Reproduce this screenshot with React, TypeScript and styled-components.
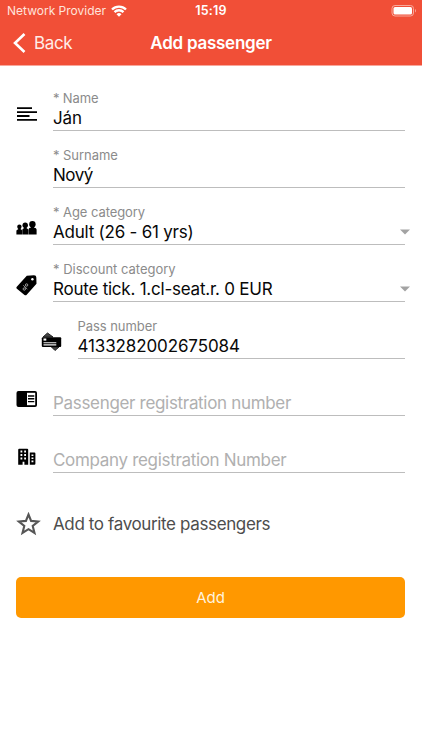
import React from "react";
import styled, { createGlobalStyle } from "styled-components";

const GlobalStyle = createGlobalStyle`
  * { box-sizing: border-box; }
  body { margin: 0; background: #fff; font-family: Inter, "Liberation Sans", sans-serif; }
`;

const Screen = styled.main`
  width: 422px;
  height: 750px;
  display: flex;
  flex-direction: column;
  background: #fff;
  overflow: hidden;
`;

const Header = styled.header`
  height: 66px;
  flex: none;
  background: #f14f37;
  border-bottom: 1px solid #f8a79b;
  color: #fff;
`;

const Bar = styled.div<{ $height: number }>`
  display: grid;
  grid-template-columns: 1fr auto 1fr;
  align-items: center;
  height: ${(p) => p.$height}px;
`;

const StatusLeft = styled.div`
  display: flex;
  align-items: center;
  gap: 5px;
  padding-left: 7px;
  color: #ffe3dc;
`;

const StatusRight = styled.div`
  display: flex;
  justify-content: flex-end;
  padding-right: 5px;
`;

const Text = styled.span<{ $size: number; $track?: number; $weight?: number; $color?: string }>`
  font-size: ${(p) => p.$size}px;
  line-height: 22px;
  letter-spacing: ${(p) => p.$track ?? 0}px;
  font-weight: ${(p) => p.$weight ?? 400};
  color: ${(p) => p.$color ?? "inherit"};
  white-space: nowrap;
`;

const BackButton = styled.button`
  display: flex;
  align-items: center;
  gap: 8px;
  padding: 0 0 0 13px;
  border: 0;
  background: none;
  color: #ffece8;
  font-family: inherit;
`;

const Form = styled.form`
  display: flex;
  flex-direction: column;
  padding: 8px 17px 0 16px;
`;

const Row = styled.div<{ $indent?: boolean }>`
  display: grid;
  grid-template-columns: 37px 1fr;
  height: 57px;
  padding-left: ${(p) => (p.$indent ? 24.5 : 0)}px;
`;

const IconCell = styled.div`
  display: flex;
  align-items: center;
  height: 24px;
  margin-top: 28px;
`;

const Field = styled.div`
  display: flex;
  flex-direction: column;
  justify-content: flex-end;
  border-bottom: 1px solid #bdbdbd;
`;

const Label = styled.label<{ $track: number }>`
  font-size: 13px;
  line-height: 16px;
  letter-spacing: ${(p) => p.$track}px;
  color: #8b8b8b;
  white-space: nowrap;
`;

const Value = styled.div`
  display: flex;
  align-items: center;
  justify-content: space-between;
  height: 24px;
  margin-right: -5px;
`;

const Favourite = styled.div`
  display: grid;
  grid-template-columns: 37px 1fr;
  align-items: center;
  height: 24px;
  margin-top: 39px;
`;

const AddButton = styled.button`
  height: 41px;
  margin-top: 41px;
  border: 0;
  border-radius: 5px;
  background: #ff9800;
  color: #fff3dc;
  font-family: inherit;
`;

const Wifi = () => (
  <svg width="16" height="12" viewBox="0 0 16 12" fill="none" stroke="#fff" strokeWidth="2.3">
    <path d="M1 4.5a9.9 9.9 0 0 1 14 0M3.5 7.1a6.4 6.4 0 0 1 9 0" />
    <path d="M8 11.8 5.5 9.3a3.5 3.5 0 0 1 5 0z" fill="#fff" stroke="none" />
  </svg>
);

const Battery = () => (
  <svg width="26" height="12" viewBox="0 0 26 12">
    <rect x="1" y=".5" width="21.5" height="10.5" rx="3" fill="none" stroke="#f8a99c" />
    <rect x="2.5" y="2" width="18.5" height="7.5" rx="1.5" fill="#fff" />
    <path d="M24 4v3.5q1-.5 1-1.75T24 4" fill="#f8a99c" />
  </svg>
);

const Chevron = () => (
  <svg width="13" height="20" viewBox="0 0 13 20" fill="none" stroke="#fff" strokeWidth="2.6">
    <path d="M11.5 1 2 10l9.5 9" />
  </svg>
);

const Caret = () => (
  <svg width="10" height="6" viewBox="0 0 10 6">
    <path d="M0 .5h10L5 5.5z" fill="#a3a3a3" />
  </svg>
);

const Lines = () => (
  <svg width="21" height="14" viewBox="0 0 21 14" stroke="#000" strokeWidth="1.8">
    <path d="M1 1.2h15M1 5.2h20M1 9h12.5M1 12.8h20" />
  </svg>
);

const People = () => (
  <svg width="21" height="16" viewBox="0 0 21 16">
    <circle cx="3.4" cy="6.8" r="2.2" />
    <path d="M.4 14.5v-3.7q0-1 1.8-1.5V8h2.4v1.3q1.5.3 1.5 1.5v3.7z" />
    <circle cx="9.2" cy="5.3" r="2.7" />
    <path d="M6.3 14.5V10q0-1.2 1.6-1.7V7h2.7v1.3q1.7.5 1.7 1.7v4.5z" />
    <circle cx="16.4" cy="4.2" r="3.2" />
    <path d="M12.5 14.5v-5q0-1.5 2.4-2V6h3.1v1.5q2.6.5 2.6 2v5z" />
  </svg>
);

const Tag = () => (
  <svg width="21" height="21" viewBox="0 0 21 21">
    <path d="M10.8.8 18 .2q2.3 0 2.3 2l.2 6.5-9.8 11q-1 1-2.2.2L.9 13.8q-1-1-.1-2z" />
    <circle cx="16.4" cy="4.3" r="1.2" fill="#fff" />
    <g fill="none" stroke="#bbb" strokeWidth=".8">
      <path d="m7.3 10.3 4 3.8" />
      <circle cx="10.6" cy="10" r="1.2" />
      <circle cx="8.3" cy="14" r="1.2" />
    </g>
  </svg>
);

const Cards = () => (
  <svg width="21" height="20" viewBox="0 0 21 20">
    <path d="m2 5 4.5-4L12 5zM10.5 15l3.5 3.5 4-3.5z" fill="#444" stroke="#222" />
    <rect x=".8" y="5.2" width="19.4" height="9.8" rx="1" />
    <rect x="2.5" y="6.5" width="2.8" height="2.1" fill="#fff" />
    <path d="M2.5 10.7h12.8M2.5 12.9h12.8" stroke="#eee" strokeWidth="1.1" />
  </svg>
);

const Reader = () => (
  <svg width="21" height="16" viewBox="0 0 21 16">
    <rect x=".5" y="0" width="20.5" height="16" rx="2" />
    <path d="M11 1.8h8.2v12.4H11z" fill="#fff" />
    <path d="M12 5h6.3M12 7.8h6.3M12 10.6h6.3" stroke="#000" strokeWidth="1.4" />
  </svg>
);

const Buildings = () => (
  <svg width="21" height="17" viewBox="0 0 21 17">
    <path d="M3.2.7h8q1 0 1 1v15H8.4v-3H6.6v3H2.2v-15q0-1 1-1M13.8 4.4h4.6q1 0 1 1v10.3q0 1-1 1h-4.6z" />
    <g fill="#fff">
      <path d="M4.5 2.5h1.8v1.9H4.5zM8.2 2.5H10v1.9H8.2zM4.5 6h1.8v1.9H4.5zM8.2 6H10v1.9H8.2zM4.5 9.5h1.8v1.9H4.5zM8.2 9.5H10v1.9H8.2z" />
      <path d="M15.5 6.4h1.9V8h-1.9zM15.5 9.5h1.9v1.6h-1.9zM15.5 12.6h1.9v1.6h-1.9z" />
    </g>
  </svg>
);

const Star = () => (
  <svg width="25" height="24" viewBox="0 0 24 24" fill="none" stroke="#565656" strokeWidth="2.1">
    <path d="m12 2.5 2.6 6.4 7.1.6-5.5 4.5 1.8 7-6-3.8-6 3.8 1.8-7-5.5-4.5 7.1-.6z" />
  </svg>
);

interface FieldRow {
  icon?: React.ReactNode;
  label?: string;
  labelTrack?: number;
  text: string;
  track: number;
  select?: boolean;
  indent?: boolean;
}

const rows: FieldRow[] = [
  { icon: <Lines />, label: "* Name", labelTrack: -0.15, text: "Ján", track: -0.1 },
  { label: "* Surname", labelTrack: -0.05, text: "Nový", track: -0.45 },
  { icon: <People />, label: "* Age category", labelTrack: -0.07, text: "Adult (26 - 61 yrs)", track: -0.23, select: true },
  { icon: <Tag />, label: "* Discount category", labelTrack: -0.01, text: "Route tick. 1.cl-seat.r. 0 EUR", track: -0.23, select: true },
  { icon: <Cards />, label: "Pass number", labelTrack: -0.05, text: "4133282002675084", track: -0.12, indent: true },
  { icon: <Reader />, text: "Passenger registration number", track: -0.32 },
  { icon: <Buildings />, text: "Company registration Number", track: -0.32 },
];

export default function App() {
  return (
    <Screen>
      <GlobalStyle />
      <Header>
        <Bar $height={22}>
          <StatusLeft>
            <Text $size={12}>Network Provider</Text>
            <Wifi />
          </StatusLeft>
          <Text $size={12.5} $weight={600} $track={0.2}>15:19</Text>
          <StatusRight><Battery /></StatusRight>
        </Bar>
        <Bar $height={42}>
          <BackButton type="button">
            <Chevron />
            <Text $size={17} $track={-0.35}>Back</Text>
          </BackButton>
          <Text $size={17} $weight={600} $track={-0.25}>Add passenger</Text>
        </Bar>
      </Header>
      <Form>
        {rows.map((row) => (
          <Row key={row.text} $indent={row.indent}>
            <IconCell>{row.icon}</IconCell>
            <Field>
              {row.label && <Label $track={row.labelTrack ?? 0}>{row.label}</Label>}
              <Value>
                <Text $size={17} $track={row.track} $color={row.label ? "#080808" : "#b0b0b0"}>
                  {row.text}
                </Text>
                {row.select && <Caret />}
              </Value>
            </Field>
          </Row>
        ))}
        <Favourite>
          <Star />
          <Text $size={17} $track={-0.37} $color="#4d4d4d">Add to favourite passengers</Text>
        </Favourite>
        <AddButton type="button"><Text $size={15}>Add</Text></AddButton>
      </Form>
    </Screen>
  );
}
